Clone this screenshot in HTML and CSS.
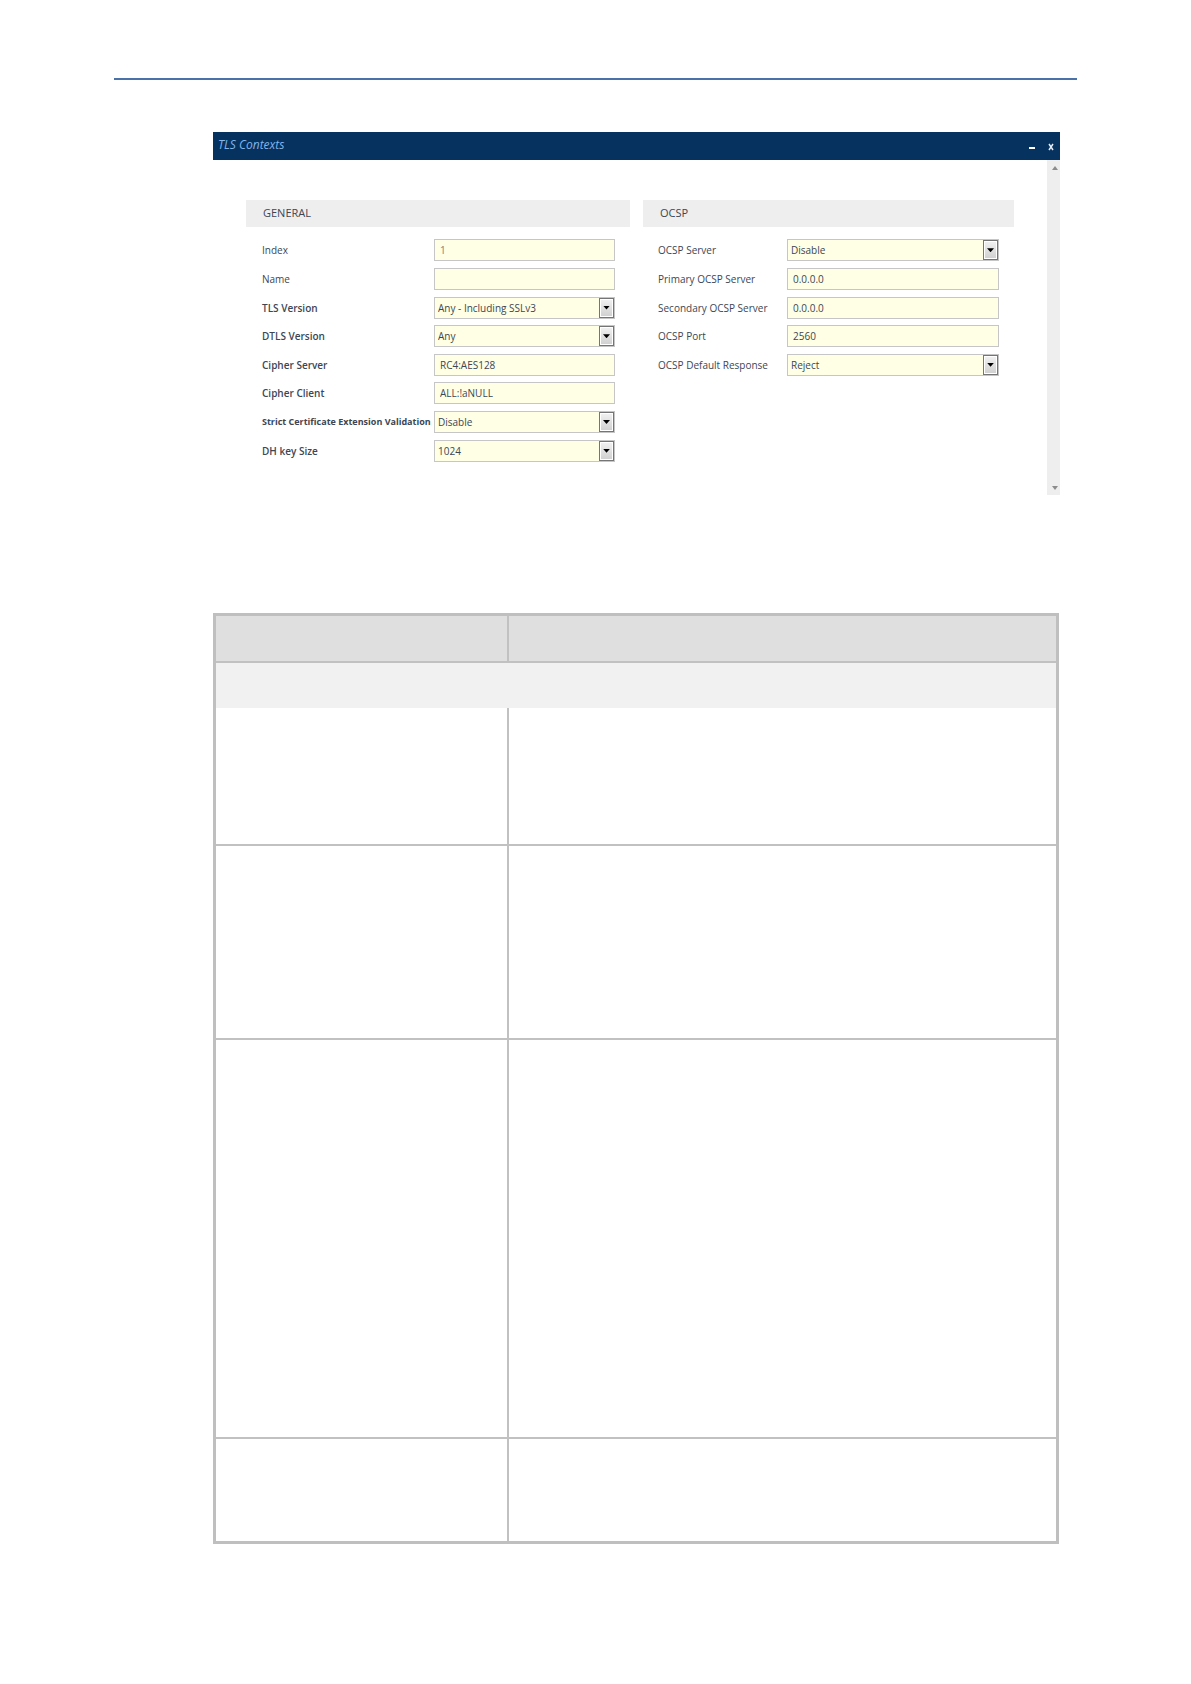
FILE: index.html
```html
<!DOCTYPE html>
<html lang="en">
<head>
<meta charset="utf-8">
<title>TLS Contexts</title>
<link rel="stylesheet" href="styles.css">
</head>
<body>
<main class="sheet">
  <hr class="rule">
  <div class="content">
    <section class="dialog" aria-labelledby="dialog-title">
      <header class="titlebar">
        <h1 class="title" id="dialog-title">TLS Contexts</h1>
        <button class="window-button" type="button" aria-label="Minimize"><svg width="6" height="10" viewBox="0 0 6 10"><path d="M0 5h6v2H0z" fill="#fff"/></svg></button>
        <button class="window-button" type="button" aria-label="Close"><svg width="6" height="10" viewBox="0 0 6 10"><path d="M1 2l4 6M5 2L1 8" fill="none" stroke="#e6eef5" stroke-width="1.5"/></svg></button>
      </header>
      <div class="dialog-body">
        <form class="sections">
          <section class="section general">
            <h2 class="section-title">GENERAL</h2>
            <div class="fields">
              <div class="field"><label for="index">Index</label><input class="control muted" id="index" type="text" value="1"></div>
              <div class="field"><label for="name">Name</label><input class="control" id="name" type="text"></div>
              <div class="field strong"><label for="tls">TLS Version</label><span class="picker"><select class="control" id="tls"><option>Any - Including SSLv3</option></select></span></div>
              <div class="field strong"><label for="dtls">DTLS Version</label><span class="picker"><select class="control" id="dtls"><option>Any</option></select></span></div>
              <div class="field strong"><label for="cipher-server">Cipher Server</label><input class="control" id="cipher-server" type="text" value="RC4:AES128"></div>
              <div class="field strong"><label for="cipher-client">Cipher Client</label><input class="control" id="cipher-client" type="text" value="ALL:!aNULL"></div>
              <div class="field strong"><label class="long" for="strict">Strict Certificate Extension Validation</label><span class="picker"><select class="control" id="strict"><option>Disable</option></select></span></div>
              <div class="field strong"><label for="dh">DH key Size</label><span class="picker"><select class="control" id="dh"><option>1024</option></select></span></div>
            </div>
          </section>
          <section class="section ocsp">
            <h2 class="section-title">OCSP</h2>
            <div class="fields">
              <div class="field"><label for="ocsp-server">OCSP Server</label><span class="picker"><select class="control" id="ocsp-server"><option>Disable</option></select></span></div>
              <div class="field"><label for="primary">Primary OCSP Server</label><input class="control" id="primary" type="text" value="0.0.0.0"></div>
              <div class="field"><label for="secondary">Secondary OCSP Server</label><input class="control" id="secondary" type="text" value="0.0.0.0"></div>
              <div class="field"><label for="port">OCSP Port</label><input class="control" id="port" type="text" value="2560"></div>
              <div class="field"><label for="response">OCSP Default Response</label><span class="picker"><select class="control" id="response"><option>Reject</option></select></span></div>
            </div>
          </section>
        </form>
        <div class="scrollbar" aria-hidden="true">
          <svg width="6" height="4" viewBox="0 0 6 4"><path d="M0 4l3-4 3 4z" fill="#8c8c8c"/></svg>
          <svg width="6" height="4" viewBox="0 0 6 4"><path d="M0 0h6L3 4z" fill="#8c8c8c"/></svg>
        </div>
      </div>
    </section>
    <table class="parameters">
      <colgroup><col class="col-name"><col></colgroup>
      <thead>
        <tr class="row-head"><th></th><th></th></tr>
      </thead>
      <tbody>
        <tr class="row-group"><td colspan="2"></td></tr>
        <tr class="row-short"><td></td><td></td></tr>
        <tr class="row-medium"><td></td><td></td></tr>
        <tr class="row-tall"><td></td><td></td></tr>
        <tr class="row-last"><td></td><td></td></tr>
      </tbody>
    </table>
  </div>
</main>
</body>
</html>
```
FILE: styles.css
```css
*,
*::before,
*::after {
  box-sizing: border-box;
}

body {
  margin: 0;
  background: #fff;
  color: #3c4654;
  font: 10px/14px "Open Sans", "Noto Sans", sans-serif;
}

.sheet {
  padding: 78px 114px 140px;
}

.rule {
  height: 2px;
  margin: 0;
  border: 0;
  background: #4a72a8;
}

.content {
  padding: 52px 17px 0 99px;
}

/* Dialog */
.titlebar {
  display: flex;
  align-items: center;
  gap: 13px;
  height: 28px;
  padding: 0 6px 0 5px;
  background: #06325f;
}

.title {
  flex: 1;
  margin: 0 0 2px;
  color: #84b4e8;
  font-size: 12px;
  font-style: italic;
  font-weight: 400;
  line-height: 16px;
}

.window-button {
  display: flex;
  padding: 2px 0 0;
  border: 0;
  background: none;
}

.dialog-body {
  display: flex;
  min-height: 335px;
}

.sections {
  display: grid;
  flex: 1;
  grid-template-columns: 384fr 371fr;
  gap: 13px;
  align-content: start;
  padding: 40px 33px 0;
}

.section-title {
  margin: 0 0 9px;
  padding: 0 17px 2px;
  background: #eee;
  font-size: 11px;
  font-weight: 400;
  line-height: 25px;
}

.fields {
  display: grid;
  grid-template-rows: repeat(8, 1fr);
  height: 229px;
  padding: 0 15px 0 16px;
}

.field {
  display: grid;
  align-items: center;
}

.general .field {
  grid-template-columns: 172px 1fr;
}

.ocsp .fields {
  padding-left: 15px;
}

.ocsp .field {
  grid-template-columns: 129px 1fr;
}

.field label {
  white-space: nowrap;
}

.strong label {
  font-weight: 600;
}

.strong .long {
  font-size: 9px;
  font-weight: 700;
}

.control {
  display: block;
  width: 100%;
  height: 22px;
  margin: 0;
  padding: 0 5px;
  border: 1px solid #c6c6c6;
  border-radius: 0;
  background: #ffffe6;
  color: #3c4654;
  font: inherit;
}

.muted {
  color: #7c827c;
}

.picker {
  position: relative;
}

.picker .control {
  padding: 0 18px 0 3px;
  appearance: none;
}

.picker::before {
  content: "";
  position: absolute;
  top: 1px;
  right: 1px;
  width: 15px;
  height: 20px;
  border: 1px solid #757575;
  background: linear-gradient(#f2f2f2, #cfcfcf);
  box-shadow: inset 0 0 0 1px #fff;
  pointer-events: none;
}

.picker::after {
  content: "";
  position: absolute;
  top: 9px;
  right: 5px;
  width: 7px;
  height: 4px;
  background: #000;
  clip-path: polygon(0 0, 100% 0, 50% 100%);
  pointer-events: none;
}

.scrollbar {
  display: flex;
  flex-direction: column;
  align-items: center;
  justify-content: space-between;
  width: 13px;
  padding: 6px 0 5px 2px;
  background: #eee;
}

/* Parameter table */
.parameters {
  width: calc(100% - 1px);
  margin-top: 118px;
  border: 3px solid #bfbfbf;
  border-spacing: 0;
  table-layout: fixed;
}

.col-name {
  width: 293px;
}

.parameters th,
.parameters td {
  padding: 0;
  border: 0 solid #c1c1c1;
  border-bottom-width: 2px;
}

.parameters th:first-child,
.parameters td:first-child {
  border-right-width: 2px;
}

.parameters th {
  background: #dfdfdf;
}

.parameters .row-group td {
  border: 0;
  background: #f1f1f1;
}

.parameters .row-last td {
  border-bottom: 0;
}

.row-head {
  height: 47px;
}

.row-group {
  height: 45px;
}

.row-short {
  height: 138px;
}

.row-medium {
  height: 194px;
}

.row-tall {
  height: 399px;
}

.row-last {
  height: 102px;
}
```
